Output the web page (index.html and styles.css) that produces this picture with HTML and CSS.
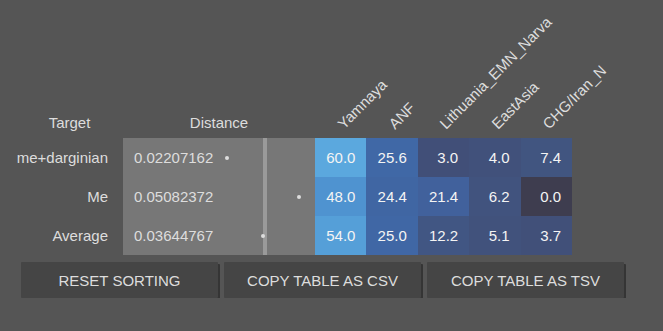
FILE: index.html
```html
<!DOCTYPE html>
<html lang="en">
<head>
    <meta charset="UTF-8">
    <meta name="viewport" content="width=device-width, initial-scale=1.0">
    <title>Distance Table</title>
    <link rel="stylesheet" href="styles.css">
</head>
<body>
    <table class="results">
        <colgroup>
            <col class="col-target">
            <col class="col-dist">
            <col class="col-val"><col class="col-val"><col class="col-val"><col class="col-val"><col class="col-val">
        </colgroup>
        <thead>
            <tr>
                <th class="plain">Target</th>
                <th class="plain">Distance</th>
                <th class="rot"><div class="label">Yamnaya</div></th>
                <th class="rot"><div class="label">ANF</div></th>
                <th class="rot"><div class="label">Lithuania_EMN_Narva</div></th>
                <th class="rot"><div class="label">EastAsia</div></th>
                <th class="rot"><div class="label">CHG/Iran_N</div></th>
            </tr>
        </thead>
        <tbody>
            <tr>
                <td class="target">me+darginian</td>
                <td class="dist">0.02207162<i class="dot" style="left: 102px"></i></td>
                <td class="val" style="background: #5ba8de">60.0</td>
                <td class="val" style="background: #4068a6">25.6</td>
                <td class="val" style="background: #414f78">3.0</td>
                <td class="val" style="background: #41517b">4.0</td>
                <td class="val" style="background: #415580">7.4</td>
            </tr>
            <tr>
                <td class="target">Me</td>
                <td class="dist">0.05082372<i class="dot" style="left: 174px"></i></td>
                <td class="val" style="background: #4f93d0">48.0</td>
                <td class="val" style="background: #4066a3">24.4</td>
                <td class="val" style="background: #41619c">21.4</td>
                <td class="val" style="background: #41537e">6.2</td>
                <td class="val" style="background: #3e3d4f">0.0</td>
            </tr>
            <tr>
                <td class="target">Average</td>
                <td class="dist">0.03644767<i class="dot" style="left: 138px"></i></td>
                <td class="val" style="background: #559fd8">54.0</td>
                <td class="val" style="background: #4067a5">25.0</td>
                <td class="val" style="background: #415683">12.2</td>
                <td class="val" style="background: #41527c">5.1</td>
                <td class="val" style="background: #415079">3.7</td>
            </tr>
        </tbody>
    </table>

    <div class="actions">
        <button>Reset sorting</button>
        <button>Copy table as CSV</button>
        <button>Copy table as TSV</button>
    </div>
</body>
</html>
```

FILE: styles.css
```css
body {
    margin: 0;
    background-color: #555555;
    color: #dddddd;
    font-family: 'Liberation Sans', Arial, sans-serif;
    font-size: 15px;
}
.results {
    margin-left: 16px;
    width: 556px;
    table-layout: fixed;
    border-collapse: collapse;
}
.col-target {
    width: 107px;
}
.col-dist {
    width: 192px;
}
.col-val {
    width: 51.4px;
}
th {
    height: 131px;
    padding: 0 0 7px 0;
    vertical-align: bottom;
    font-weight: normal;
    line-height: 17px;
}
.plain {
    text-align: center;
}
/* column names lean up to the right from the middle of their column */
.rot .label {
    width: 0;
    margin-left: 50%;
    white-space: nowrap;
    text-align: left;
    transform-origin: 0 100%;
    transform: translate(5px, 1px) rotate(-45deg);
}
td {
    height: 39px;
    padding: 0;
    line-height: 17px;
}
.target {
    text-align: right;
    padding-right: 15px;
}
.dist {
    position: relative;
    padding-left: 11px;
    background: linear-gradient(to right, #777777 140px, #9a9a9a 140px, #9a9a9a 144px, #777777 144px);
}
.dot {
    position: absolute;
    top: 50%;
    width: 4px;
    height: 4px;
    margin-top: -2px;
    border-radius: 50%;
    background-color: #dddddd;
}
.val {
    text-align: right;
    padding-right: 11px;
    color: #f4f4f4;
}
.actions {
    display: flex;
    gap: 6px;
    margin: 7px 0 0 21px;
}
button {
    width: 197px;
    height: 36px;
    border: none;
    border-radius: 1px;
    background-color: #454545;
    box-shadow: 2px 2px 0 #353535;
    color: #dddddd;
    font-family: inherit;
    font-size: 15px;
    text-transform: uppercase;
    cursor: pointer;
}
button:hover {
    background-color: #4c4c4c;
}
```
